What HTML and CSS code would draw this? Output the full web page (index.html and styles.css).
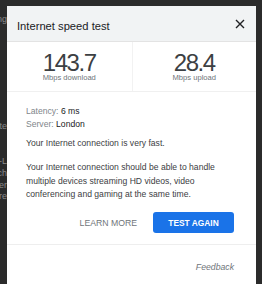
FILE: index.html
```html
<!DOCTYPE html>
<html>
<head>
<meta charset="utf-8">
<link rel="stylesheet" href="styles.css">
</head>
<body>
<div class="backdrop">
  <div class="frag f1">ting</div>
  <div class="frag f2">ote</div>
  <div class="frag f3">D-L</div>
  <div class="frag f4">ich</div>
  <div class="frag f5">ver</div>
  <div class="frag f6">ore</div>
</div>
<div class="dialog">
  <div class="header">
    <div class="title">Internet speed test</div>
    <div class="close">
      <svg width="10" height="10" viewBox="0 0 10 10"><path d="M1 1L9 9M9 1L1 9" stroke="#202124" stroke-width="1.4" fill="none"/></svg>
    </div>
  </div>
  <div class="stats">
    <div class="stat">
      <div class="num">143.7</div>
      <div class="unit">Mbps download</div>
    </div>
    <div class="stat">
      <div class="num">28.4</div>
      <div class="unit">Mbps upload</div>
    </div>
  </div>
  <div class="body">
    <div class="meta">
      <div><span class="k">Latency:</span> 6 ms</div>
      <div><span class="k">Server:</span> London</div>
    </div>
    <p class="p1">Your Internet connection is very fast.</p>
    <p class="p2">Your Internet connection should be able to handle multiple devices streaming HD videos, video conferencing and gaming at the same time.</p>
    <div class="actions">
      <span class="learn">LEARN MORE</span>
      <span class="test">TEST AGAIN</span>
    </div>
  </div>
  <div class="footer"><span class="feedback">Feedback</span></div>
</div>
</body>
</html>
```
FILE: styles.css
```css
html, body {
  margin: 0;
  padding: 0;
  height: 284px;
  overflow: hidden;
  background: #2b2b2b;
  font-family: "Liberation Sans", Arial, sans-serif;
}
body {
  padding: 6px 0 0 7px;
  box-sizing: border-box;
  position: relative;
}
.backdrop {
  position: absolute;
  left: -30px;
  top: 0;
  width: 37px;
  text-align: right;
  color: #8a8a8a;
  font-size: 9px;
}
.frag { position: absolute; right: 0; white-space: nowrap; }
.f1 { top: 14px; }
.f2 { top: 121px; }
.f3 { top: 156px; }
.f4 { top: 168px; }
.f5 { top: 180px; }
.f6 { top: 191px; }
.dialog {
  width: 249px;
  height: 290px;
  background: #fff;
  position: relative;
}
.header {
  background: #f1f3f4;
  border-bottom: 1px solid #e3e3e3;
  display: flex;
  justify-content: space-between;
  padding: 0 11px 0 10px;
  box-sizing: border-box;
  height: 36px;
}
.title {
  font-size: 11.2px;
  line-height: 13px;
  color: #202124;
  margin-top: 14px;
}
.close {
  width: 10px;
  height: 10px;
  margin-top: 13px;
}
.close svg { display: block; }
.stats {
  display: grid;
  grid-template-columns: 1fr 1fr;
  border-bottom: 1px solid #f0f0f0;
  height: 49px;
}
.stat {
  text-align: center;
  padding-top: 10px;
}
.stat + .stat { border-left: 1px solid #f2f2f2; }
.num {
  font-size: 24px;
  line-height: 21px;
  letter-spacing: -1.4px;
  color: #3c4043;
}
.unit {
  font-size: 7.6px;
  line-height: 9px;
  color: #70757a;
}
.body {
  padding: 13px 22px 0 19px;
  font-size: 8.6px;
  color: #3c4043;
}
.meta { line-height: 12.5px; color: #202124; }
.k { color: #80868b; }
p { margin: 0; line-height: 13.5px; padding-right: 4px; }
.p1 { margin-top: 7px; }
.p2 { margin-top: 10.5px; }
.actions {
  display: flex;
  justify-content: flex-end;
  align-items: center;
  gap: 16px;
  margin-top: 10.5px;
}
.learn {
  color: #70757a;
  font-size: 8.7px;
}
.test {
  width: 81px;
  height: 21px;
  box-sizing: border-box;
  background: #1a73e8;
  border-radius: 3px;
  color: #fff;
  font-weight: bold;
  font-size: 8.4px;
  display: flex;
  align-items: center;
  justify-content: center;
}
.footer {
  margin-top: 11px;
  border-top: 1px solid #eeeeee;
  padding: 11px 22px 0 0;
  text-align: right;
}
.feedback {
  font-style: italic;
  font-size: 8.7px;
  line-height: 13px;
  color: #70757a;
}
```
